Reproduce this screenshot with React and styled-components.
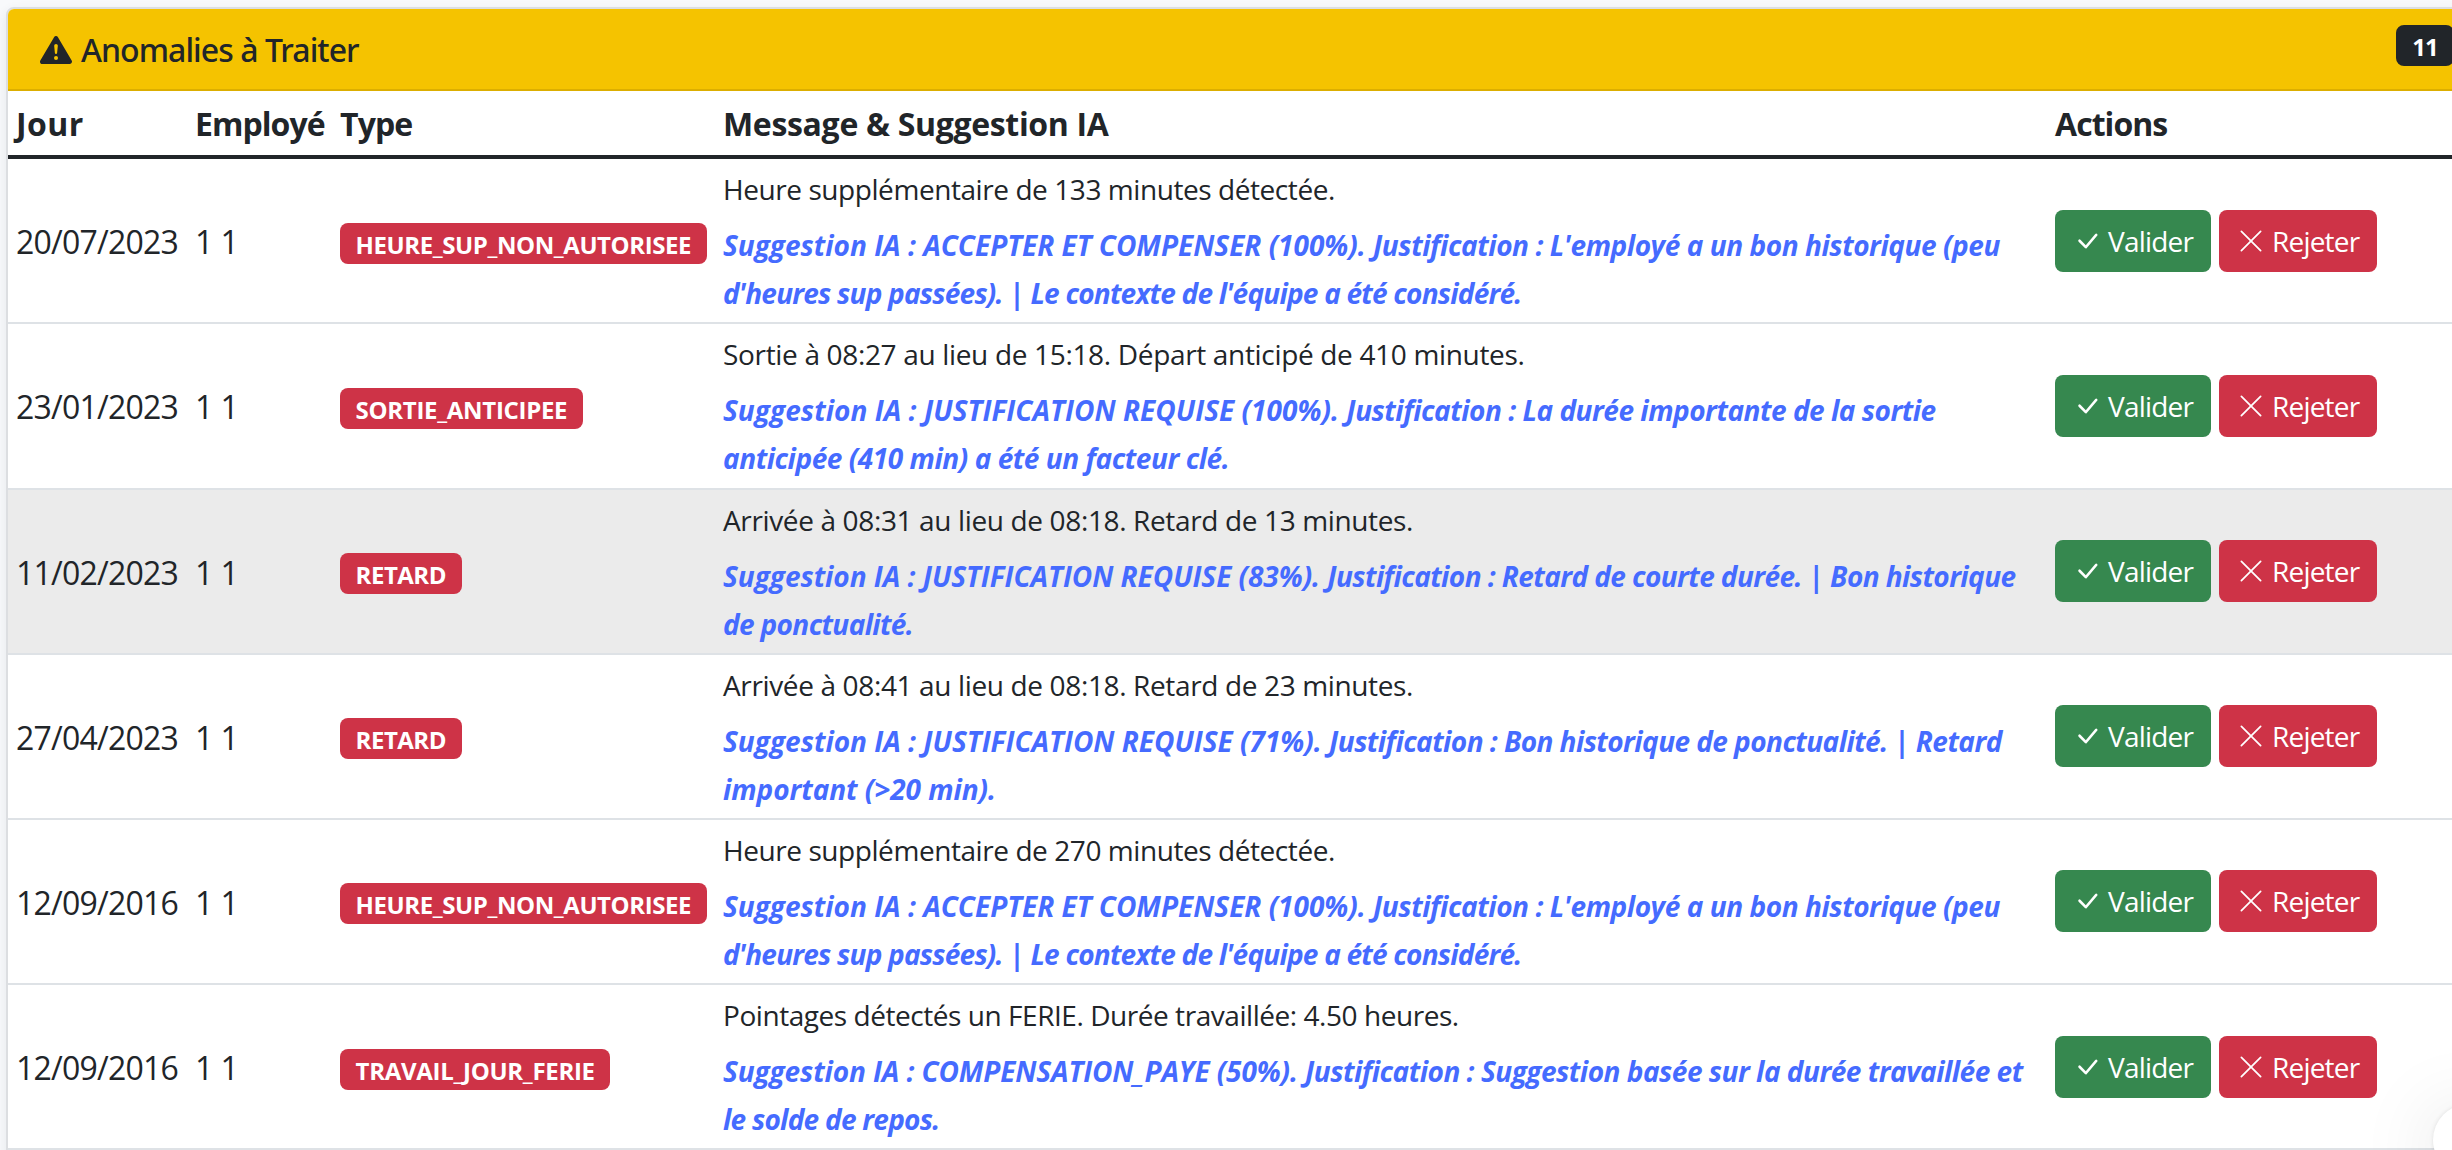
import React from 'react';
import styled, { createGlobalStyle } from 'styled-components';
import { BsCheckLg, BsXLg, BsExclamationTriangleFill } from 'react-icons/bs';

const GlobalStyle = createGlobalStyle`
  * { box-sizing: border-box; }
  body {
    margin: 0;
    background: #f8f9fb;
    color: #212529;
    font: 400 32px/48px "Open Sans", "Noto Sans", sans-serif;
  }
`;

const Page = styled.main`
  position: relative;
  height: 1150px;
  padding: 7px 0 0 6px;
  overflow: hidden;
`;

const Card = styled.section`
  width: 2474px;
  height: 1400px;
  border: 2px solid #dcdee1;
  border-radius: 8px;
  background: #fff;
  box-shadow: 0 4px 12px rgba(30, 50, 80, 0.09);
  overflow: hidden;
`;

const CardHeader = styled.header`
  display: flex;
  align-items: flex-start;
  justify-content: space-between;
  height: 82px;
  padding: 16px 24px 0 32px;
  border-bottom: 2px solid #dcae00;
  background: #f5c300;
`;

const Title = styled.h5`
  display: flex;
  align-items: center;
  gap: 9px;
  margin: 0;
  padding-top: 1px;
  font-family: "Noto Sans", "Open Sans", sans-serif;
  font-size: 32px;
  font-weight: 500;
  letter-spacing: -0.95px;
  line-height: 48px;
`;

const Pill = styled.span`
  display: inline-block;
  height: 41px;
  padding: 0 ${(p) => (p.$dark ? 16 : 15.6)}px;
  border-radius: 8px;
  background: ${(p) => (p.$dark ? '#212529' : '#ce3347')};
  color: #fff;
  font-size: 24px;
  font-weight: 700;
  line-height: 43px;
  letter-spacing: ${(p) => p.$spacing || 0}px;
  white-space: nowrap;
`;

const GridRow = styled.div`
  display: grid;
  grid-template-columns: 179px 145px 383px 1332px 1fr;
  align-items: center;
  padding-left: 8px;
`;

const HeadRow = styled(GridRow)`
  height: 68.15px;
  padding-top: 2px;
  border-bottom: 4px solid #212529;
  font-weight: 700;
`;

const HeadCell = styled.div`
  letter-spacing: ${(p) => p.$spacing}px;
  white-space: nowrap;
`;

const BodyRow = styled(GridRow)`
  height: 165.2px;
  border-bottom: 2px solid #dee2e6;
  background: ${(p) => (p.$active ? '#ebebeb' : '#fff')};
`;

const TextCell = styled.div`
  padding-top: 3px;
  letter-spacing: ${(p) => p.$spacing}px;
  white-space: nowrap;
`;

const PillCell = styled.div`
  display: flex;
  padding-top: 5px;
`;

const MessageCell = styled.div`
  display: flex;
  flex-direction: column;
  gap: 8px;
  padding-top: 1px;
  font-size: 28px;
  white-space: nowrap;
`;

const Message = styled.div`
  letter-spacing: ${(p) => p.$spacing}px;
`;

const Suggestion = styled.em`
  display: block;
  color: #456bff;
  font-weight: 700;
`;

const Line = styled.span`
  display: block;
`;

const Phrase = styled.span`
  letter-spacing: ${(p) => p.$spacing}px;
`;

const Actions = styled.div`
  display: flex;
  gap: 8px;
`;

const Button = styled.button`
  display: flex;
  align-items: center;
  gap: 7px;
  width: ${(p) => (p.$danger ? 158 : 156)}px;
  height: 62px;
  padding: 0 0 0 18px;
  border: 0;
  border-radius: 8px;
  background: ${(p) => (p.$danger ? '#ce3347' : '#36884f')};
  color: #fff;
  font: inherit;
  font-size: 28px;
  letter-spacing: -0.8px;

  svg { flex: none; }
`;

const FloatingButton = styled.div`
  position: absolute;
  left: 2433px;
  top: 1104px;
  width: 72px;
  height: 72px;
  border-radius: 50%;
  background: #fff;
  box-shadow: 0 0 4px rgba(0, 0, 0, 0.1), 0 8px 80px rgba(0, 0, 0, 0.13);
`;

const HEURE_SUP = {
  type: ['HEURE_SUP_NON_AUTORISEE', -0.41],
  lines: [
    [
      ['Suggestion IA : ACCEPTER ET COMPENSER (100%). ', -0.01],
      ["Justification : L'employé a un bon historique (peu", -0.44],
    ],
    [["d'heures sup passées). | Le contexte de l'équipe a été considéré.", -0.78]],
  ],
};

const ROWS = [
  { ...HEURE_SUP, date: '20/07/2023', message: ['Heure supplémentaire de 133 minutes détectée.', -0.43] },
  {
    date: '23/01/2023',
    type: ['SORTIE_ANTICIPEE', -0.3],
    message: ['Sortie à 08:27 au lieu de 15:18. Départ anticipé de 410 minutes.', -0.33],
    lines: [
      [
        ['Suggestion IA : JUSTIFICATION REQUISE (100%). ', 0.04],
        ['Justification : La durée importante de la sortie', -0.48],
      ],
      [['anticipée (410 min) a été un facteur clé.', -0.45]],
    ],
  },
  {
    date: '11/02/2023',
    active: true,
    type: ['RETARD', -0.5],
    message: ['Arrivée à 08:31 au lieu de 08:18. Retard de 13 minutes.', -0.36],
    lines: [
      [
        ['Suggestion IA : JUSTIFICATION REQUISE (83%). ', -0.04],
        ['Justification : Retard de courte durée. | Bon historique', -0.58],
      ],
      [['de ponctualité.', -0.64]],
    ],
  },
  {
    date: '27/04/2023',
    type: ['RETARD', -0.5],
    message: ['Arrivée à 08:41 au lieu de 08:18. Retard de 23 minutes.', -0.36],
    lines: [
      [
        ['Suggestion IA : JUSTIFICATION REQUISE (71%). ', 0],
        ['Justification : Bon historique de ponctualité. | Retard', -0.56],
      ],
      [['important (>20 min).', -0.05]],
    ],
  },
  { ...HEURE_SUP, date: '12/09/2016', message: ['Heure supplémentaire de 270 minutes détectée.', -0.43] },
  {
    date: '12/09/2016',
    type: ['TRAVAIL_JOUR_FERIE', -0.3],
    message: ['Pointages détectés un FERIE. Durée travaillée: 4.50 heures.', -0.45],
    lines: [
      [
        ['Suggestion IA : COMPENSATION_PAYE (50%). ', -0.12],
        ['Justification : Suggestion basée sur la durée travaillée et', -0.49],
      ],
      [['le solde de repos.', -0.74]],
    ],
  },
];

const HEADINGS = [
  ['Jour', 0.4],
  ['Employé', -0.95],
  ['Type', -0.9],
  ['Message & Suggestion IA', -0.32],
  ['Actions', -0.95],
];

export default function App() {
  return (
    <Page>
      <GlobalStyle />
      <Card>
        <CardHeader>
          <Title>
            <BsExclamationTriangleFill size={32} />
            Anomalies à Traiter
          </Title>
          <Pill $dark $spacing={-0.8}>11</Pill>
        </CardHeader>
        <HeadRow>
          {HEADINGS.map(([label, spacing]) => (
            <HeadCell key={label} $spacing={spacing}>{label}</HeadCell>
          ))}
        </HeadRow>
        {ROWS.map((row, i) => (
          <BodyRow key={i} $active={row.active}>
            <TextCell $spacing={-0.78}>{row.date}</TextCell>
            <TextCell $spacing={-0.5}>1 1</TextCell>
            <PillCell>
              <Pill $spacing={row.type[1]}>{row.type[0]}</Pill>
            </PillCell>
            <MessageCell>
              <Message $spacing={row.message[1]}>{row.message[0]}</Message>
              <Suggestion>
                {row.lines.map((phrases, n) => (
                  <Line key={n}>
                    {phrases.map(([text, spacing]) => (
                      <Phrase key={text} $spacing={spacing}>{text}</Phrase>
                    ))}
                  </Line>
                ))}
              </Suggestion>
            </MessageCell>
            <Actions>
              <Button type="button"><BsCheckLg size={28} />Valider</Button>
              <Button type="button" $danger><BsXLg size={28} />Rejeter</Button>
            </Actions>
          </BodyRow>
        ))}
      </Card>
      <FloatingButton />
    </Page>
  );
}
